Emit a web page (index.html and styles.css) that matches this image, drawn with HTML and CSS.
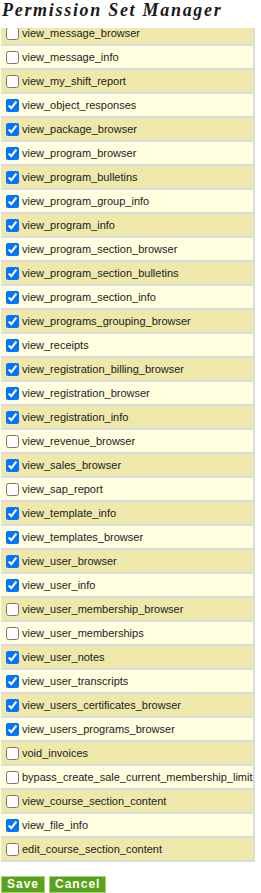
FILE: index.html
```html
<!DOCTYPE html>
<html lang="en">
<head>
    <meta charset="UTF-8">
    <title>Permission Set Manager</title>
    <link rel="stylesheet" href="styles.css">
</head>
<body>
    <h1 class="page-title">Permission Set Manager</h1>

    <form class="perm-form">
        <div class="perm-scroll">
            <div class="perm-list">
                <label class="perm-row"><input type="checkbox"> view_message_browser</label>
                <label class="perm-row"><input type="checkbox"> view_message_info</label>
                <label class="perm-row"><input type="checkbox"> view_my_shift_report</label>
                <label class="perm-row"><input type="checkbox" checked> view_object_responses</label>
                <label class="perm-row"><input type="checkbox" checked> view_package_browser</label>
                <label class="perm-row"><input type="checkbox" checked> view_program_browser</label>
                <label class="perm-row"><input type="checkbox" checked> view_program_bulletins</label>
                <label class="perm-row"><input type="checkbox" checked> view_program_group_info</label>
                <label class="perm-row"><input type="checkbox" checked> view_program_info</label>
                <label class="perm-row"><input type="checkbox" checked> view_program_section_browser</label>
                <label class="perm-row"><input type="checkbox" checked> view_program_section_bulletins</label>
                <label class="perm-row"><input type="checkbox" checked> view_program_section_info</label>
                <label class="perm-row"><input type="checkbox" checked> view_programs_grouping_browser</label>
                <label class="perm-row"><input type="checkbox" checked> view_receipts</label>
                <label class="perm-row"><input type="checkbox" checked> view_registration_billing_browser</label>
                <label class="perm-row"><input type="checkbox" checked> view_registration_browser</label>
                <label class="perm-row"><input type="checkbox" checked> view_registration_info</label>
                <label class="perm-row"><input type="checkbox"> view_revenue_browser</label>
                <label class="perm-row"><input type="checkbox" checked> view_sales_browser</label>
                <label class="perm-row"><input type="checkbox"> view_sap_report</label>
                <label class="perm-row"><input type="checkbox" checked> view_template_info</label>
                <label class="perm-row"><input type="checkbox" checked> view_templates_browser</label>
                <label class="perm-row"><input type="checkbox" checked> view_user_browser</label>
                <label class="perm-row"><input type="checkbox" checked> view_user_info</label>
                <label class="perm-row"><input type="checkbox"> view_user_membership_browser</label>
                <label class="perm-row"><input type="checkbox"> view_user_memberships</label>
                <label class="perm-row"><input type="checkbox" checked> view_user_notes</label>
                <label class="perm-row"><input type="checkbox" checked> view_user_transcripts</label>
                <label class="perm-row"><input type="checkbox" checked> view_users_certificates_browser</label>
                <label class="perm-row"><input type="checkbox" checked> view_users_programs_browser</label>
                <label class="perm-row"><input type="checkbox"> void_invoices</label>
                <label class="perm-row"><input type="checkbox"> bypass_create_sale_current_membership_limit</label>
                <label class="perm-row"><input type="checkbox"> view_course_section_content</label>
                <label class="perm-row"><input type="checkbox" checked> view_file_info</label>
                <label class="perm-row"><input type="checkbox"> edit_course_section_content</label>
            </div>
        </div>

        <div class="button-group">
            <button type="submit" class="btn">Save</button>
            <button type="button" class="btn">Cancel</button>
        </div>
    </form>
</body>
</html>
```

FILE: styles.css
```css
body {
    margin: 0;
    padding: 0 1px;
    background: white;
    font-family: 'Liberation Sans', Arial, sans-serif;
    color: #222;
}
.page-title {
    margin: 0 0 0 1px;
    height: 28px;
    font-family: 'Liberation Serif', 'Times New Roman', serif;
    font-style: italic;
    font-weight: bold;
    font-size: 18px;
    letter-spacing: 1.7px;
    line-height: 20px;
    color: #1a1a1a;
}
.perm-scroll {
    width: 254px;
    height: 834px;
    overflow: hidden;
    background-color: #dcdcdc;
}
.perm-list {
    display: flex;
    flex-direction: column;
    gap: 2px;
    margin-top: -6px;
    padding: 0 2px 2px 0;
}
.perm-row {
    display: flex;
    align-items: center;
    height: 22px;
    font-size: 11px;
    white-space: nowrap;
    background-color: #ffffe0;
}
.perm-row:nth-child(odd) {
    background-color: #eee8aa;
}
.perm-row input {
    margin: 0 3px 0 5px;
    width: 13px;
    height: 13px;
}
.button-group {
    display: flex;
    gap: 4px;
    margin-top: 14px;
}
.btn {
    padding: 1px 5px;
    height: 17px;
    border: 1px solid #a9cf7a;
    background-color: #5aa21b;
    color: white;
    font-family: 'Liberation Sans', Arial, sans-serif;
    font-weight: bold;
    font-size: 12px;
    letter-spacing: 1px;
    line-height: 13px;
    cursor: pointer;
}
```
